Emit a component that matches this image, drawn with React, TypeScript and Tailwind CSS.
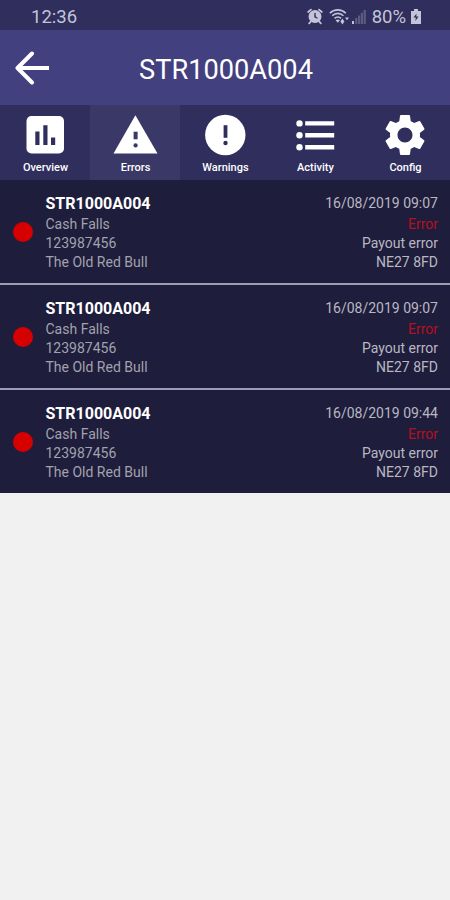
import type { ReactNode } from 'react'
import { MdSettings } from 'react-icons/md'

type Tab = { label: string; icon: ReactNode; active?: boolean }

const tabs: Tab[] = [
  {
    label: 'Overview',
    icon: (
      <svg width="50" height="50" viewBox="0 0 50 50">
        <rect x="6.5" y="6" width="37.5" height="37.5" rx="5" fill="currentColor" />
        <path d="M15.3 21.5h4.2V35h-4.2zM23.3 15.3h4.2V35h-4.2zM31 27.5h4.2V35H31z" fill="#2f2e5c" />
      </svg>
    ),
  },
  {
    label: 'Errors',
    active: true,
    icon: (
      <svg width="50" height="50" viewBox="0 0 50 50">
        <path d="M25.4 5.2 47.5 43.6h-44z" fill="currentColor" />
        <path d="M23.6 21.7h4v7.6h-4z" fill="#3a3866" />
        <circle cx="25.6" cy="35.4" r="2.1" fill="#3a3866" />
      </svg>
    ),
  },
  {
    label: 'Warnings',
    icon: (
      <svg width="50" height="50" viewBox="0 0 50 50">
        <circle cx="25.3" cy="25" r="20.2" fill="currentColor" />
        <path d="M23.6 15.2h3.8v12.6h-3.8z" fill="#2f2e5c" />
        <circle cx="25.5" cy="33" r="2.2" fill="#2f2e5c" />
      </svg>
    ),
  },
  {
    label: 'Activity',
    icon: (
      <svg width="50" height="50" viewBox="0 0 50 50" fill="currentColor">
        <circle cx="9.5" cy="13.4" r="3.2" />
        <circle cx="9.5" cy="25.3" r="3.2" />
        <circle cx="9.5" cy="37.2" r="3.2" />
        <path d="M15.2 11.2h29v4.4h-29zM15.2 23.1h29v4.4h-29zM15.2 35h29v4.4h-29z" />
      </svg>
    ),
  },
  { label: 'Config', icon: <MdSettings size={50} /> },
]

const events = [
  { id: 1, date: '16/08/2019 09:07' },
  { id: 2, date: '16/08/2019 09:07' },
  { id: 3, date: '16/08/2019 09:44' },
]

function AlarmIcon() {
  return (
    <svg width="16" height="17" viewBox="0 0 16 17" fill="none" stroke="currentColor" strokeLinecap="round">
      <circle cx="8" cy="8.5" r="5.2" strokeWidth="2.6" />
      <circle cx="8" cy="8.5" r="5" fill="currentColor" stroke="none" />
      <path d="M1.2 4 4 1.6M14.8 4 12 1.6M3.8 13.5 2.2 15.4M12.2 13.5l1.6 1.9" strokeWidth="1.8" />
      <path d="M8 5.4v3.4l2 1.2" stroke="#2f2e5c" strokeWidth="1.4" />
    </svg>
  )
}

function WifiIcon() {
  return (
    <svg width="20" height="17" viewBox="0 0 20 17" fill="none" stroke="currentColor" strokeWidth="1.6">
      <path d="M.8 5.2c4.4-4.4 11.6-4.4 16 0M3.2 7.8c3.2-3.2 8-3.2 11.2 0M5.6 10.4c1.9-1.9 4.6-1.9 6.4 0" />
      <path d="M6.6 12.2 8.8 14.8 11 12.2c-1.4-1-3-1-4.4 0z" fill="currentColor" stroke="none" />
      <path d="m11.4 13.4 2-2.8 2 2.8zM11.4 13.6h4l-2 2.8zM16 9.4h4l-2 2.8z" fill="currentColor" stroke="none" />
    </svg>
  )
}

function SignalIcon() {
  return (
    <svg width="14" height="15" viewBox="0 0 14 15" fill="currentColor">
      <path d="M0 12h2v3H0z" />
      <path d="M3.2 9h2.2v6H3.2zM6 6.5h2.2V15H6zM8.8 3.8H11V15H8.8zM11.6 1h2.2v14h-2.2z" opacity=".3" />
    </svg>
  )
}

function BatteryIcon() {
  return (
    <svg width="10" height="15" viewBox="0 0 10 15" fill="currentColor">
      <path d="M3 0h4v2h3v13H0V2h3z" />
      <path d="M5.6 4.4 2.4 8.6h2.4l-.4 3.4 3.2-4.4H5.2z" fill="#2f2e5c" />
    </svg>
  )
}

function StatusBar() {
  return (
    <div className="flex h-[30px] items-center justify-between bg-[#2f2e5c] pr-[29px] pl-[31px] text-[#c4c3da]">
      <span className="mt-[4px] text-[18.5px] leading-none">12:36</span>
      <div className="mt-[2px] flex items-center">
        <AlarmIcon />
        <span className="ml-[6px]"><WifiIcon /></span>
        <span className="ml-[3px]"><SignalIcon /></span>
        <span className="mt-[2px] ml-[6px] text-[18.5px] leading-none">80%</span>
        <span className="ml-[5px]"><BatteryIcon /></span>
      </div>
    </div>
  )
}

function Header() {
  return (
    <header className="grid h-[75px] grid-cols-[60px_1fr_60px] items-center bg-[#43407f] text-white">
      <button className="pl-[15px]" aria-label="Back">
        <svg width="35" height="34" viewBox="0 0 35 34" fill="none" stroke="currentColor" strokeWidth="4" strokeLinecap="round" strokeLinejoin="round">
          <path d="M17 2.5 2.5 17 17 31.5" />
          <path d="M3 17h31" strokeLinecap="butt" />
        </svg>
      </button>
      <h1 className="mt-[7px] ml-[2px] text-center text-[27.2px] leading-none whitespace-nowrap">STR1000A004</h1>
    </header>
  )
}

export default function App() {
  return (
    <div className="min-h-screen w-full bg-[#f1f1f1] font-['Roboto',sans-serif]">
      <StatusBar />
      <Header />

      <nav className="grid h-[75px] grid-cols-5 bg-[#2f2e5c] text-white">
        {tabs.map(({ label, icon, active }) => (
          <button key={label} className={`flex flex-col items-center pt-[5px] ${active ? 'bg-[#3a3866]' : ''}`}>
            {icon}
            <span className="mt-[2px] ml-px text-[11px] leading-3 font-medium">{label}</span>
          </button>
        ))}
      </nav>

      <ul className="divide-y-2 divide-[#9d9cb2] bg-[#1f1d3c]">
        {events.map(ev => (
          <li key={ev.id} className="flex h-[105px] items-center pr-3 pl-[13px] text-sm leading-[19px] text-[#a3a2ae] last:h-[103px]">
            <span className="size-5 rounded-full bg-[#d60000]" />
            <div className="ml-[12.5px] flex-1 pt-[2px]">
              <p className="mb-[1px] text-base leading-5 font-bold text-white">STR1000A004</p>
              <p>Cash Falls</p>
              <p>123987456</p>
              <p>The Old Red Bull</p>
            </div>
            <div className="pt-[2px] text-right text-[#b9b8c2]">
              <p className="mb-[2px]">{ev.date}</p>
              <p className="text-[#b5101f]">Error</p>
              <p>Payout error</p>
              <p>NE27 8FD</p>
            </div>
          </li>
        ))}
      </ul>
    </div>
  )
}
